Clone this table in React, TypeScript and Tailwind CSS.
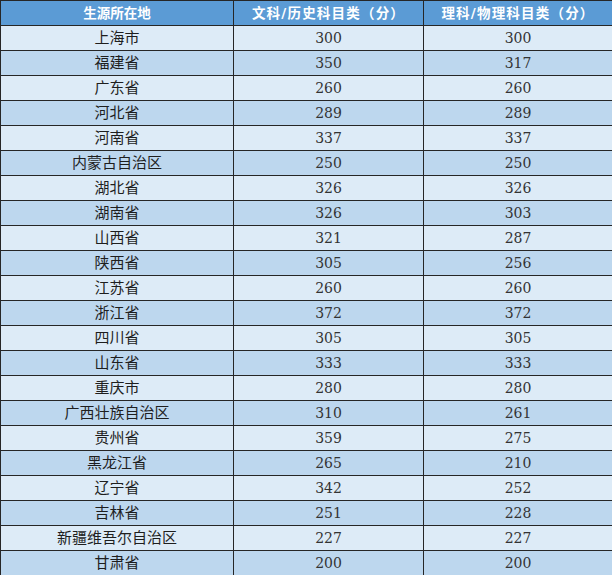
const rows: [string, number, number][] = [
  ["上海市", 300, 300],
  ["福建省", 350, 317],
  ["广东省", 260, 260],
  ["河北省", 289, 289],
  ["河南省", 337, 337],
  ["内蒙古自治区", 250, 250],
  ["湖北省", 326, 326],
  ["湖南省", 326, 303],
  ["山西省", 321, 287],
  ["陕西省", 305, 256],
  ["江苏省", 260, 260],
  ["浙江省", 372, 372],
  ["四川省", 305, 305],
  ["山东省", 333, 333],
  ["重庆市", 280, 280],
  ["广西壮族自治区", 310, 261],
  ["贵州省", 359, 275],
  ["黑龙江省", 265, 210],
  ["辽宁省", 342, 252],
  ["吉林省", 251, 228],
  ["新疆维吾尔自治区", 227, 227],
  ["甘肃省", 200, 200],
];

const cjk = "font-['Liberation_Sans','Noto_Sans_CJK_SC',sans-serif]";
const num = "font-['DejaVu_Serif','Noto_Sans_CJK_SC',serif]";
const head = "font-['DejaVu_Serif','Noto_Sans_CJK_SC',sans-serif]";

export default function App() {
  return (
    <div className="w-[612px] h-[575px] overflow-hidden bg-white">
      <div className="grid grid-cols-[233px_190px_189px] border-l border-t border-[#262626]">
        <div className={`h-[25px] flex items-center justify-center bg-[#5b9bd5] border-r border-b border-[#262626] text-white text-[13.5px] font-bold ${head}`}>
          生源所在地
        </div>
        <div className={`h-[25px] flex items-center justify-center bg-[#5b9bd5] border-r border-b border-[#262626] text-white text-[13.5px] font-bold tracking-[1.2px] ${head}`}>
          文科/历史科目类（分）
        </div>
        <div className={`h-[25px] flex items-center justify-center bg-[#5b9bd5] border-r border-b border-[#262626] text-white text-[13.5px] font-bold tracking-[1.2px] ${head}`}>
          理科/物理科目类（分）
        </div>
        {rows.map(([name, a, b], i) => {
          const bg = i % 2 === 0 ? "bg-[#ddebf7]" : "bg-[#bdd7ee]";
          return [
            <div key={name + "n"} className={`h-[25px] flex items-center justify-center border-r border-b border-[#262626] text-[#1e1e1e] text-[15px] ${bg} ${cjk}`}>
              {name}
            </div>,
            <div key={name + "a"} className={`h-[25px] flex items-center justify-center border-r border-b border-[#262626] text-[#333] text-[14px] ${bg} ${num}`}>
              {a}
            </div>,
            <div key={name + "b"} className={`h-[25px] flex items-center justify-center border-r border-b border-[#262626] text-[#333] text-[14px] ${bg} ${num}`}>
              {b}
            </div>,
          ];
        })}
      </div>
    </div>
  );
}
